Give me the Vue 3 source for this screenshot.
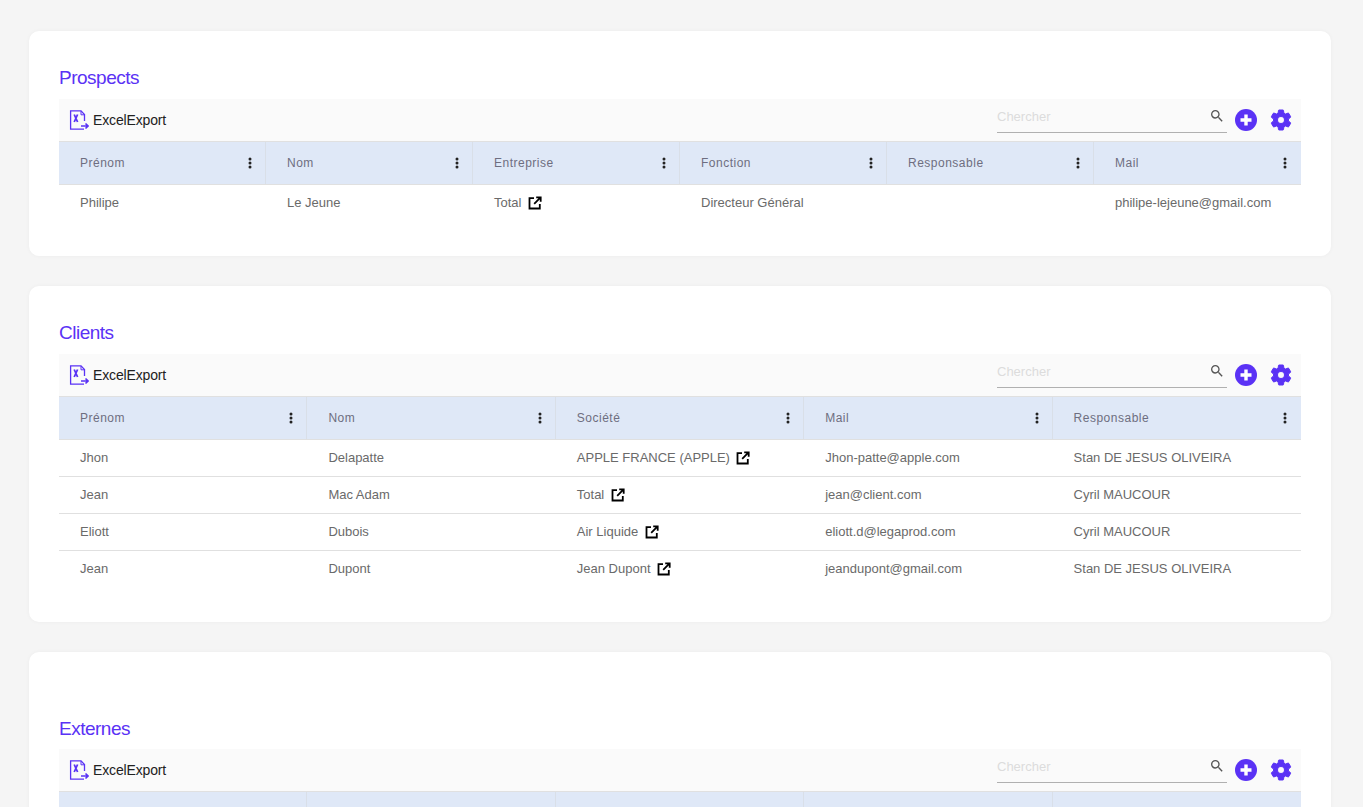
<script setup>
const sections = [
  {
    title: 'Prospects',
    headers: ['Prénom', 'Nom', 'Entreprise', 'Fonction', 'Responsable', 'Mail'],
    rows: [
      ['Philipe', 'Le Jeune', { link: 'Total' }, 'Directeur Général', '', 'philipe-lejeune@gmail.com'],
    ],
  },
  {
    title: 'Clients',
    headers: ['Prénom', 'Nom', 'Société', 'Mail', 'Responsable'],
    rows: [
      ['Jhon', 'Delapatte', { link: 'APPLE FRANCE (APPLE)' }, 'Jhon-patte@apple.com', 'Stan DE JESUS OLIVEIRA'],
      ['Jean', 'Mac Adam', { link: 'Total' }, 'jean@client.com', 'Cyril MAUCOUR'],
      ['Eliott', 'Dubois', { link: 'Air Liquide' }, 'eliott.d@legaprod.com', 'Cyril MAUCOUR'],
      ['Jean', 'Dupont', { link: 'Jean Dupont' }, 'jeandupont@gmail.com', 'Stan DE JESUS OLIVEIRA'],
    ],
  },
  {
    title: 'Externes',
    spaced: true,
    headers: ['Prénom', 'Nom', 'Société', 'Mail', 'Responsable'],
    rows: [],
  },
]
const gridFor = (s) => ({ gridTemplateColumns: `repeat(${s.headers.length}, 1fr)` })
const isLink = (c) => typeof c === 'object'
</script>

<template>
  <div class="page">
    <section v-for="s in sections" :key="s.title" class="card" :class="{ spaced: s.spaced }">
      <h2 class="title">{{ s.title }}</h2>
      <div class="toolbar">
        <button class="export">
          <svg class="xl" width="20" height="20" viewBox="0 0 20 20" fill="none">
            <path d="M15.5 11V4.5L12 .8H1.6v18.4h13.4" stroke="#5a32f5" stroke-width="1.3" />
            <path d="M12 1v3.8h3.5" stroke="#5a32f5" stroke-width="1" />
            <path d="M5.2 4.5l3.4 7.5M8.6 4.5L5.2 12" stroke="#5a32f5" stroke-width="1.8" />
            <path d="M12 16h7M16.5 13.5l2.6 2.5-2.6 2.5" stroke="#5a32f5" stroke-width="1.7" />
          </svg>
          <span>ExcelExport</span>
        </button>
        <div class="tools">
          <label class="search">
            <input type="text" placeholder="Chercher" />
            <svg width="16" height="16" viewBox="0 0 24 24" fill="#555">
              <path d="M15.5 14h-.79l-.28-.27A6.47 6.47 0 0 0 16 9.5 6.5 6.5 0 1 0 9.5 16c1.61 0 3.09-.59 4.23-1.57l.27.28v.79l5 4.99L20.49 19l-4.99-5zm-6 0C7.01 14 5 11.99 5 9.5S7.01 5 9.5 5 14 7.01 14 9.5 11.99 14 9.5 14z" />
            </svg>
          </label>
          <svg class="plus" width="22" height="22" viewBox="0 0 22 22">
            <circle cx="11" cy="11" r="11" fill="#5a32f5" />
            <path d="M11 5.5v11M5.5 11h11" stroke="#fff" stroke-width="3.4" />
          </svg>
          <svg class="gear" width="24" height="24" viewBox="0 0 24 24" fill="#5a32f5" stroke="#5a32f5" stroke-width="1">
            <path d="M19.43 12.98c.04-.32.07-.64.07-.98s-.03-.66-.07-.98l2.11-1.65c.19-.15.24-.42.12-.64l-2-3.46c-.12-.22-.39-.3-.61-.22l-2.49 1c-.52-.4-1.08-.73-1.69-.98l-.38-2.65A.488.488 0 0 0 14 2h-4c-.25 0-.46.18-.49.42l-.38 2.65c-.61.25-1.17.59-1.69.98l-2.49-1c-.23-.09-.49 0-.61.22l-2 3.46c-.13.22-.07.49.12.64l2.11 1.65c-.04.32-.07.65-.07.98s.03.66.07.98l-2.11 1.65c-.19.15-.24.42-.12.64l2 3.46c.12.22.39.3.61.22l2.49-1c.52.4 1.08.73 1.69.98l.38 2.65c.03.24.24.42.49.42h4c.25 0 .46-.18.49-.42l.38-2.65c.61-.25 1.17-.59 1.69-.98l2.49 1c.23.09.49 0 .61-.22l2-3.46c.12-.22.07-.49-.12-.64l-2.11-1.65zM12 15.5c-1.93 0-3.5-1.57-3.5-3.5s1.57-3.5 3.5-3.5 3.5 1.57 3.5 3.5-1.57 3.5-3.5 3.5z" />
          </svg>
        </div>
      </div>
      <div class="head" :style="gridFor(s)">
        <div v-for="h in s.headers" :key="h" class="hcell">
          <span>{{ s.rows.length ? h : '' }}</span>
          <svg v-if="s.rows.length" width="4" height="12" viewBox="0 0 4 12" fill="#222">
            <circle cx="2" cy="2" r="1.5" /><circle cx="2" cy="6" r="1.5" /><circle cx="2" cy="10" r="1.5" />
          </svg>
        </div>
      </div>
      <div class="rows">
        <div v-for="(r, i) in s.rows" :key="i" class="row" :style="gridFor(s)">
          <div v-for="(c, j) in r" :key="j" class="cell">
            <template v-if="isLink(c)">
              <span>{{ c.link }}</span>
              <svg class="ext" width="14" height="14" viewBox="0 0 14 14" fill="none" stroke="#000" stroke-width="1.8">
                <path d="M6 2.2H1.5v10.3H11.8V8" />
                <path d="M8.2 1.3h4.5v4.5M12.3 1.7L6.2 7.8" />
              </svg>
            </template>
            <template v-else>{{ c }}</template>
          </div>
        </div>
      </div>
    </section>
  </div>
</template>

<style>
html, body { margin: 0; background: #f5f5f5; }
</style>

<style scoped>
.page {
  height: 807px;
  overflow: hidden;
  box-sizing: border-box;
  padding: 31px 32px 0 29px;
  display: flex;
  flex-direction: column;
  gap: 30px;
  font-family: "Liberation Sans", Arial, sans-serif;
}
.card {
  flex: none;
  background: #fff;
  border-radius: 10px;
  padding: 34px 30px 35px;
  box-shadow: 0 0 4px rgba(0, 0, 0, 0.04);
}
.card.spaced { padding-top: 64px; }
.card.spaced .title { margin-bottom: 7px; }
.title {
  margin: 0 0 8px;
  height: 26px;
  font-size: 19px;
  line-height: 26px;
  font-weight: 400;
  letter-spacing: -0.5px;
  color: #5a32f5;
}
.toolbar {
  height: 42px;
  background: #fafafa;
  border-bottom: 1px solid #e0e0e0;
  display: flex;
  align-items: center;
  justify-content: space-between;
}
.export {
  display: flex;
  align-items: center;
  gap: 4px;
  padding: 0 0 0 10px;
  border: 0;
  background: none;
  font: 400 14px "Liberation Sans", sans-serif;
  letter-spacing: -0.15px;
  color: #212121;
}
.tools { display: flex; align-items: center; padding-right: 8px; }
.search {
  width: 230px;
  height: 32px;
  display: flex;
  align-items: center;
  box-sizing: border-box;
  border-bottom: 1px solid #b0b0b0;
  margin: 0 8px 0 0;
  position: relative;
  top: -3px;
}
.search input {
  flex: 1;
  min-width: 0;
  height: 100%;
  border: 0;
  outline: 0;
  padding: 0;
  background: none;
  font: 400 13px "Liberation Sans", sans-serif;
}
.search input::placeholder { color: #dcdcdc; opacity: 1; }
.search svg { margin-right: 2px; position: relative; top: -1px; }
.gear { margin-left: 12px; }
.head {
  display: grid;
  height: 42px;
  background: #dfe8f7;
  border-bottom: 1px solid #e0e0e0;
}
.hcell {
  display: flex;
  align-items: center;
  justify-content: space-between;
  padding: 0 13px 1px 21px;
  box-sizing: border-box;
  border-right: 1px solid #d9dfe8;
  font-size: 12px;
  letter-spacing: 0.5px;
  color: #6e6e80;
}
.hcell:last-child { border-right: 0; padding-right: 14px; }
.row {
  display: grid;
  height: 36px;
  border-bottom: 1px solid #e0e0e0;
}
.row:last-child { border-bottom: 0; }
.cell {
  display: flex;
  align-items: center;
  padding: 0 0 1px 21px;
  box-sizing: border-box;
  font-size: 13px;
  color: #6a6a6a;
  white-space: nowrap;
}
.ext { margin-left: 6.5px; }
</style>
